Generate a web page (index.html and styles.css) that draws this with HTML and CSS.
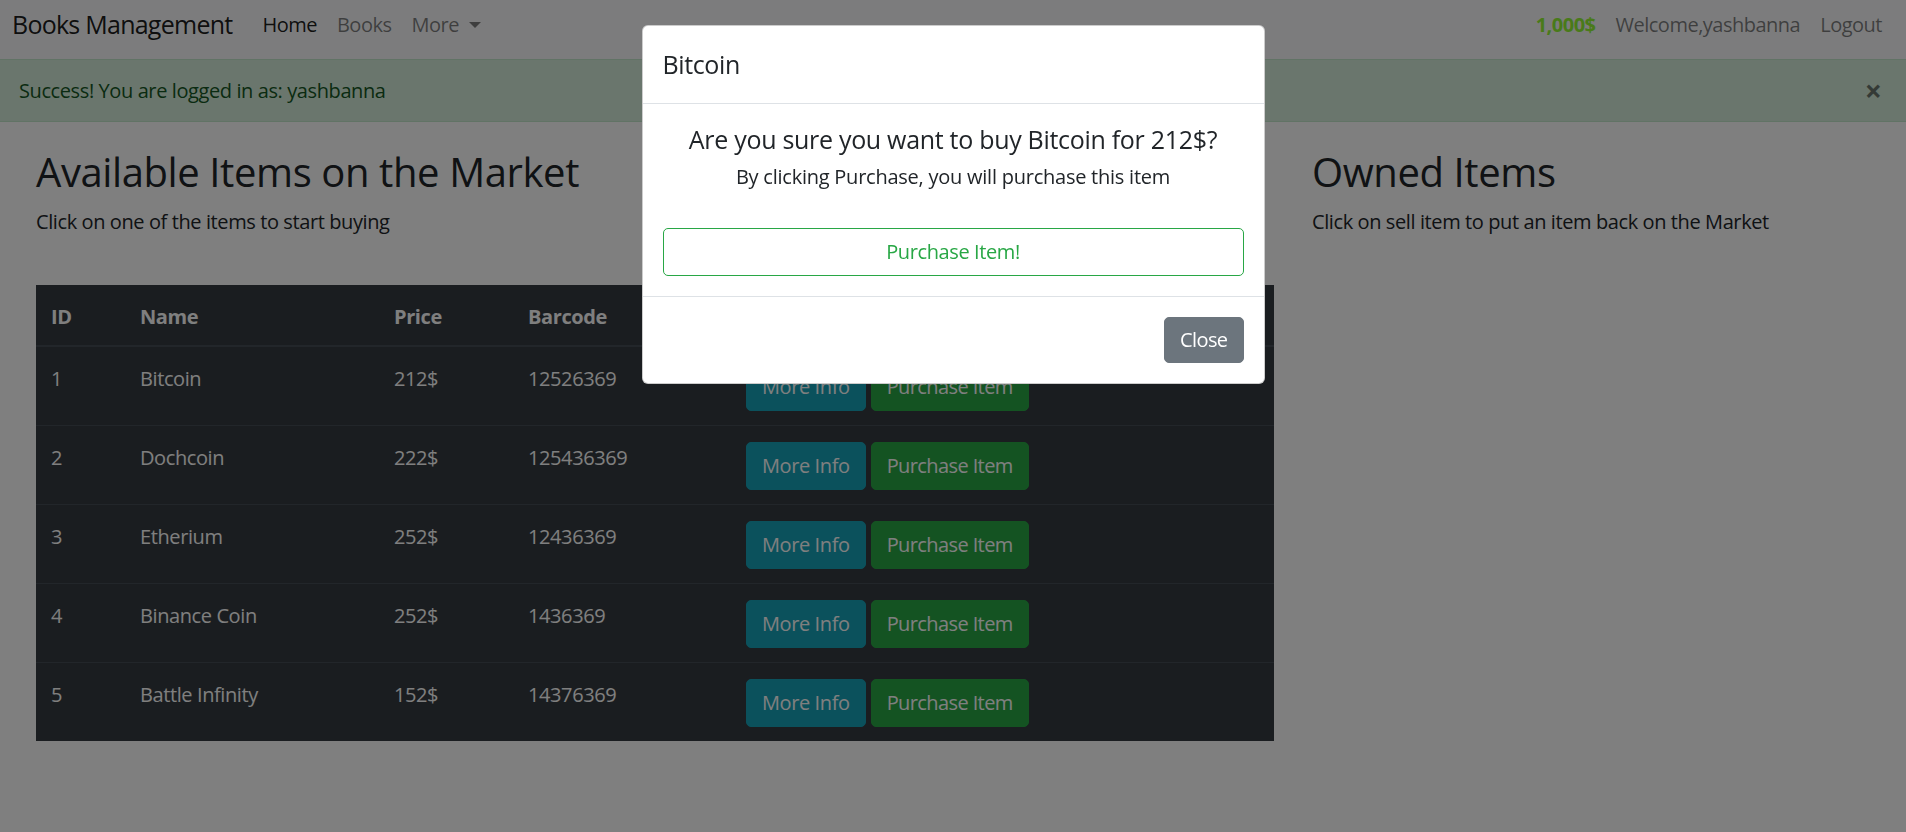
FILE: index.html
```html
<!DOCTYPE html>
<html lang="en">
<head>
<meta charset="utf-8">
<title>Books Management</title>
<link rel="stylesheet" href="styles.css">
</head>
<body>
<nav class="navbar">
  <a class="brand" href="#">Books Management</a>
  <ul class="nav">
    <li><a class="nav-link active" href="#">Home</a></li>
    <li><a class="nav-link" href="#">Books</a></li>
    <li><a class="nav-link dropdown" href="#">More<span class="caret"></span></a></li>
  </ul>
  <ul class="nav nav-right">
    <li><span class="nav-link balance">1,000$</span></li>
    <li><span class="nav-link">Welcome,yashbanna</span></li>
    <li><a class="nav-link" href="#">Logout</a></li>
  </ul>
</nav>

<div class="alert">
  <span>Success! You are logged in as: yashbanna</span>
  <button class="close" type="button">&times;</button>
</div>

<main class="content">
  <section class="market">
    <h2 class="title">Available Items on the Market</h2>
    <p class="lead">Click on one of the items to start buying</p>
    <table class="table">
      <thead>
        <tr><th class="c-id">ID</th><th class="c-name">Name</th><th class="c-price">Price</th><th class="c-barcode">Barcode</th><th class="c-opt"></th></tr>
      </thead>
      <tbody>
        <tr><td>1</td><td>Bitcoin</td><td>212$</td><td>12526369</td><td class="actions"><div class="btns"><button class="btn btn-info">More Info</button><button class="btn btn-success">Purchase Item</button></div></td></tr>
        <tr><td>2</td><td>Dochcoin</td><td>222$</td><td>125436369</td><td class="actions"><div class="btns"><button class="btn btn-info">More Info</button><button class="btn btn-success">Purchase Item</button></div></td></tr>
        <tr><td>3</td><td>Etherium</td><td>252$</td><td>12436369</td><td class="actions"><div class="btns"><button class="btn btn-info">More Info</button><button class="btn btn-success">Purchase Item</button></div></td></tr>
        <tr><td>4</td><td>Binance Coin</td><td>252$</td><td>1436369</td><td class="actions"><div class="btns"><button class="btn btn-info">More Info</button><button class="btn btn-success">Purchase Item</button></div></td></tr>
        <tr><td>5</td><td>Battle Infinity</td><td>152$</td><td>14376369</td><td class="actions"><div class="btns"><button class="btn btn-info">More Info</button><button class="btn btn-success">Purchase Item</button></div></td></tr>
      </tbody>
    </table>
  </section>
  <section class="owned">
    <h2 class="title">Owned Items</h2>
    <p class="lead">Click on sell item to put an item back on the Market</p>
  </section>
</main>

<div class="backdrop"></div>

<div class="modal">
  <div class="modal-content">
    <div class="modal-header">
      <h5 class="modal-title">Bitcoin</h5>
    </div>
    <div class="modal-body">
      <h4 class="question">Are you sure you want to buy Bitcoin for 212$?</h4>
      <p class="note">By clicking Purchase, you will purchase this item</p>
      <button class="btn btn-outline-success btn-block">Purchase Item!</button>
    </div>
    <div class="modal-footer">
      <button class="btn btn-secondary">Close</button>
    </div>
  </div>
</div>
</body>
</html>
```

FILE: styles.css
```css
* { box-sizing: border-box; }

html, body {
  margin: 0;
  height: 100%;
  overflow: hidden;
}

body {
  font-family: "Open Sans", "Noto Sans", sans-serif;
  font-size: 20px;
  line-height: 1.5;
  letter-spacing: -0.02em;
  color: #212529;
  background: #fff;
}

a { text-decoration: none; }

/* Navbar */
.navbar {
  height: 59px;
  display: flex;
  align-items: center;
  padding: 0 14px 10px 12px;
  background: #f8f9fa;
}

.brand {
  font-size: 25px;
  line-height: 1.5;
  letter-spacing: -0.03em;
  color: rgba(0, 0, 0, 0.9);
  margin-right: 20px;
}

.nav {
  display: flex;
  list-style: none;
  margin: 0;
  padding: 0;
}

.nav-right { margin-left: auto; }

.nav-link {
  display: block;
  padding: 0 10px;
  color: rgba(0, 0, 0, 0.5);
  letter-spacing: -0.025em;
}

.nav-link.active { color: rgba(0, 0, 0, 0.9); }

.caret {
  display: inline-block;
  margin-left: 10px;
  vertical-align: 4px;
  border-top: 6px solid;
  border-left: 6px solid transparent;
  border-right: 6px solid transparent;
}

.balance {
  color: #92f534;
  font-weight: 700;
}

/* Alert */
.alert {
  position: relative;
  height: 63px;
  display: flex;
  align-items: center;
  padding: 0 60px 0 19px;
  background: #d4edda;
  border-top: 1px solid #c3e6cb;
  border-bottom: 1px solid #c3e6cb;
  color: #155724;
}

.close {
  position: absolute;
  right: 24px;
  top: 50%;
  transform: translateY(-50%);
  padding: 0;
  border: 0;
  background: transparent;
  font-family: inherit;
  font-size: 30px;
  font-weight: 700;
  line-height: 1;
  color: #000;
  opacity: 0.5;
}

/* Main */
.content {
  display: flex;
  gap: 38px;
  padding: 26px 0 0 36px;
}

.market { width: 1238px; flex: none; }
.owned { flex: 1; }

.title {
  margin: 0 0 11px;
  font-size: 40px;
  font-weight: 500;
  line-height: 1.2;
  letter-spacing: -0.01em;
}

.lead {
  margin: 0 0 48px;
  font-size: 20px;
}

/* Table */
.table {
  width: 1238px;
  border-collapse: collapse;
  background: #343a40;
  color: #fff;
}

.table th,
.table td {
  padding: 17px 15px 13px;
  text-align: left;
  vertical-align: top;
  line-height: 30px;
}

.table td.actions { padding: 16px 15px 14px; }

.table th {
  font-weight: 700;
  border-bottom: 2px solid #454d55;
}

.table td { border-top: 1px solid #454d55; }

.c-id { width: 89px; }
.c-name { width: 254px; }
.c-price { width: 134px; }
.c-barcode { width: 218px; }

.btns {
  display: flex;
  gap: 5px;
}

/* Buttons */
.btn {
  display: inline-block;
  font-family: inherit;
  font-size: 20px;
  line-height: 30px;
  letter-spacing: -0.03em;
  padding: 8px 15px;
  border: 1px solid transparent;
  border-radius: 5px;
  color: #fff;
  background: transparent;
  text-align: center;
}

.btn-info { background: #17a2b8; border-color: #17a2b8; letter-spacing: -0.02em; }
.btn-success { background: #28a745; border-color: #28a745; }
.btn-secondary { background: #6c757d; border-color: #6c757d; padding: 7px 15px; }

.btn-outline-success {
  color: #28a745;
  border-color: #28a745;
  background: transparent;
  letter-spacing: -0.02em;
}

.btn-block { display: block; width: 100%; }

/* Modal */
.backdrop {
  position: fixed;
  inset: 0;
  background: rgba(0, 0, 0, 0.5);
}

.modal {
  position: fixed;
  inset: 0;
  display: flex;
  justify-content: center;
  align-items: flex-start;
  padding-top: 25px;
}

.modal-content {
  width: 623px;
  background: #fff;
  border: 1px solid rgba(0, 0, 0, 0.2);
  border-radius: 6px;
}

.modal-header {
  padding: 20px 20px 19px;
  border-bottom: 1px solid #dee2e6;
}

.modal-title {
  margin: 0;
  font-size: 25px;
  font-weight: 500;
  line-height: 1.5;
  letter-spacing: -0.015em;
}

.modal-body {
  padding: 20px;
  text-align: center;
}

.question {
  margin: 0 0 8px;
  font-size: 25px;
  font-weight: 500;
  line-height: 1.2;
  letter-spacing: -0.012em;
}

.note {
  margin: 0 0 36px;
  font-size: 20px;
  font-weight: 500;
  letter-spacing: -0.012em;
}

.modal-footer {
  display: flex;
  justify-content: flex-end;
  padding: 20px;
  border-top: 1px solid #dee2e6;
}
```
